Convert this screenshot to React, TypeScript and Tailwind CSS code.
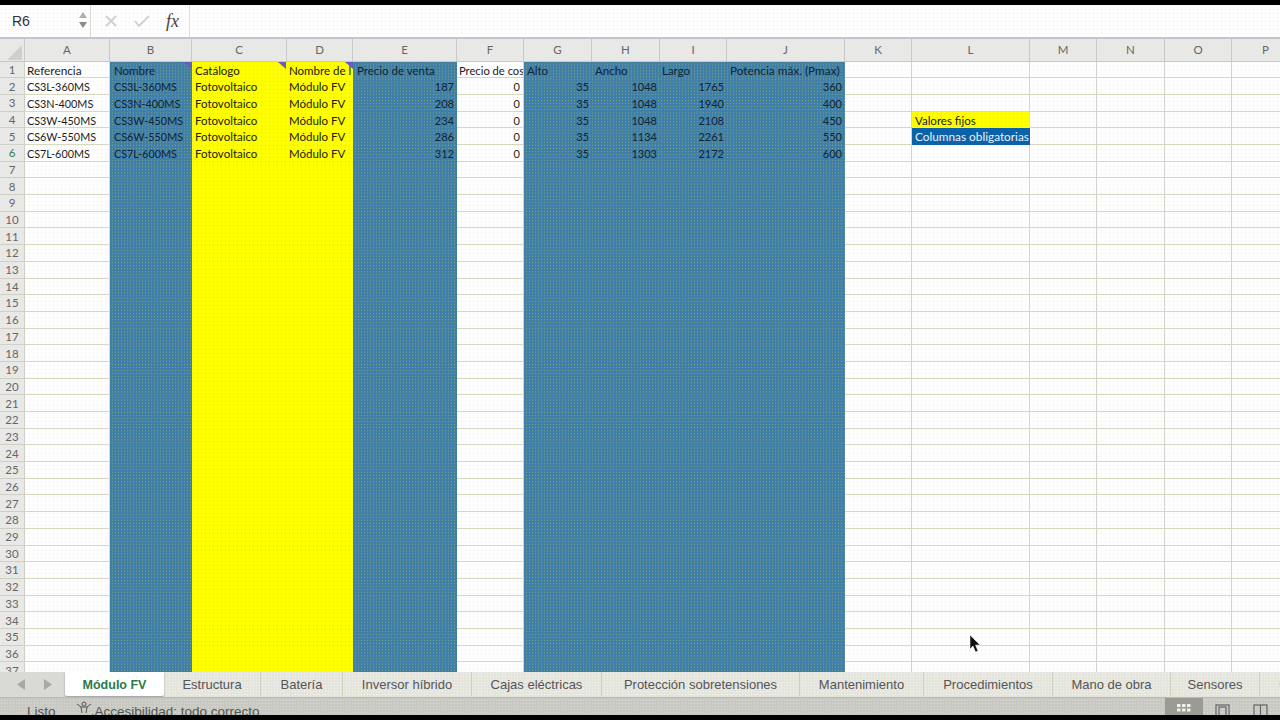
import React from "react";

const COLS = ["A","B","C","D","E","F","G","H","I","J","K","L","M","N","O","P"];

const DOT_WHITE = "bg-[#fefefe] bg-[radial-gradient(circle_at_1.5px_1.5px,#ffff50_0.8px,transparent_0.8px)] bg-[length:4px_4px] bg-fixed";
const DOT_BLUE = "bg-[#3f7fa8] bg-[radial-gradient(circle_at_1.5px_1.5px,#7f9f78_0.7px,transparent_0.7px)] bg-[length:3px_3px] bg-fixed";
const DOT_YELLOW = "bg-[#ffff00] bg-[radial-gradient(circle_at_1.5px_1.5px,#dcdc30_0.6px,transparent_0.6px)] bg-[length:4px_4px] bg-fixed";
const DOT_GREY = "bg-[#e8e8e6] bg-[radial-gradient(circle_at_1.5px_1.5px,#f4f4a8_0.8px,transparent_0.8px)] bg-[length:4px_4px] bg-fixed";
const DOT_TAB = "bg-[#e4e4e0] bg-[radial-gradient(circle_at_1.5px_1.5px,#f7f7d0_0.8px,transparent_0.8px)] bg-[length:3px_3px] bg-fixed";
const DOT_STATUS = "bg-[#c8c8c4] bg-[radial-gradient(circle_at_1.5px_1.5px,#dcdcc8_0.8px,transparent_0.8px)] bg-[length:3px_3px] bg-fixed";

const BLUE = new Set(["B","E","G","H","I","J"]);
const YELLOW = new Set(["C","D"]);

const HEAD: Record<string,string> = {A:"Referencia",B:"Nombre",C:"Catálogo",D:"Nombre de l",E:"Precio de venta",F:"Precio de cos",G:"Alto",H:"Ancho",I:"Largo",J:"Potencia máx. (Pmax)"};
const REFS = ["CS3L-360MS","CS3N-400MS","CS3W-450MS","CS6W-550MS","CS7L-600MS"];
const DATA: Record<string,(string|number)[]> = {
  A: REFS, B: REFS,
  C: Array(5).fill("Fotovoltaico"), D: Array(5).fill("Módulo FV"),
  E: [187,208,234,286,312], F: [0,0,0,0,0], G: [35,35,35,35,35],
  H: [1048,1048,1048,1134,1303], I: [1765,1940,2108,2261,2172], J: [360,400,450,550,600],
};
const PAD: Record<string,string> = {A:"pl-[2px]",B:"pl-[4px]",C:"pl-[3px]",D:"pl-[2px]",E:"pl-[4px]",F:"pl-[2px]",G:"pl-[3px]",H:"pl-[3px]",I:"pl-[2px]",J:"pl-[3px]",L:"pl-[3px]"};
const COMMENT: Record<string,string> = {B:"right-0",C:"right-[1px]",D:"right-0"};
const TABS: [string, number][] = [["Módulo FV",99],["Estructura",97],["Batería",82],["Inversor híbrido",129],["Cajas eléctricas",130],["Protección sobretensiones",198],["Mantenimiento",124],["Procedimientos",129],["Mano de obra",118],["Sensores",89],["Cables",80]];

function Cell({ col, row }: { col: string; row: number }) {
  let content: string | number | undefined;
  if (row === 1) content = HEAD[col];
  else if (row <= 6 && DATA[col]) content = DATA[col][row - 2];
  const num = typeof content === "number";
  let bg = DOT_WHITE + " border-r border-r-[#d4d4cc] border-b border-b-[#d8d8c0]";
  let color = "text-[#1c1c1c]";
  if (BLUE.has(col)) { bg = DOT_BLUE; color = "text-[#0e2436]"; }
  if (YELLOW.has(col)) { bg = DOT_YELLOW; color = "text-[#20200c]"; }
  if (col === "L" && row === 4) { bg = DOT_YELLOW; content = "Valores fijos"; }
  if (col === "L" && row === 5) { bg = "bg-[#0b62a8]"; color = "text-[#e6f0f8]"; content = "Columnas obligatorias"; }
  let size = "text-[11.5px]";
  if (num) size = "text-[11px]";
  if (row > 1 && (col === "A" || col === "B")) size = "text-[10.8px]";
  if (content === "Precio de cos") size = "text-[11.2px]";
  if (content === "Potencia máx. (Pmax)" || content === "Columnas obligatorias" || content === "Referencia") size = "text-[11.8px]";
  return (
    <div className={`relative overflow-hidden whitespace-nowrap leading-[17px] ${num ? "pr-[3px] text-right" : `text-left ${PAD[col] ?? ""}`} ${size} ${bg} ${color}`}>
      {content}
      {row === 1 && COMMENT[col] && (
        <svg className={`absolute top-0 ${COMMENT[col]}`} width="8" height="7" viewBox="0 0 8 7"><polygon points="0,0 8,0 8,7" fill="#6a5ac8" /></svg>
      )}
    </div>
  );
}

export default function App() {
  const rows = Array.from({ length: 37 }, (_, i) => i + 1);
  return (
    <div className="flex h-[720px] w-[1280px] flex-col overflow-hidden bg-black font-['Liberation_Sans',sans-serif]">
      <div className="h-[5px] shrink-0 bg-black" />
      {/* Formula bar */}
      <div className={`flex h-[34px] shrink-0 items-center border-b-2 border-[#c4c4ce] pl-[1px] ${DOT_WHITE}`}>
        <div className="flex h-full w-[90px] items-center justify-between border-r border-[#dcdcd4] pl-[11px] pr-[1px] text-[14px] text-[#333]">
          <span>R6</span>
          <svg width="12" height="24" viewBox="0 0 12 24"><polygon points="6,3 10,9 2,9" fill="#b0b0a8"/><polygon points="6,19 10,13 2,13" fill="#8c8c84"/></svg>
        </div>
        <div className="flex h-full w-[99px] items-center border-r border-[#dcdcd4] pl-[13px]">
          <svg width="14" height="14" viewBox="0 0 14 14" fill="none" stroke="#d0d0cc" strokeWidth="2"><path d="M2 2l10 10M12 2L2 12"/></svg>
          <svg className="ml-[16px]" width="16" height="14" viewBox="0 0 16 14" fill="none" stroke="#d0d0cc" strokeWidth="1.8"><path d="M1 7l4 5L15 2"/></svg>
          <span className="ml-[16px] font-['Liberation_Serif',serif] text-[18px] italic text-[#444]">fx</span>
        </div>
        <div className="flex-1" />
      </div>
      {/* Sheet */}
      <div className="grid h-[633px] shrink-0 grid-cols-[25px_85px_82px_95px_66px_104px_67px_68px_68px_67px_118px_67px_118px_67px_68px_67px_68px] grid-rows-[22.6px_repeat(37,16.7px)] overflow-hidden font-['Lato',sans-serif] text-[11px]">
        <div className={`flex items-end justify-end border-r border-b border-[#c8c8c8] pb-[1px] pr-[2px] ${DOT_GREY}`}>
          <svg width="15" height="15" viewBox="0 0 15 15"><polygon points="15,0 15,15 0,15" fill="#cfcfcb"/></svg>
        </div>
        {COLS.map((c) => (
          <div key={c} className={`flex items-center justify-center border-r border-b border-[#c8c8c8] text-[11.5px] text-[#666] ${DOT_GREY}`}>{c}</div>
        ))}
        {rows.map((r) => (
          <React.Fragment key={r}>
            <div className={`flex items-center justify-center border-r border-b border-[#cfcfc6] text-[11.5px] ${r === 6 ? "text-[#2f7d46]" : "text-[#666]"} ${DOT_GREY}`}>{r}</div>
            {COLS.map((c) => <Cell key={c} col={c} row={r} />)}
          </React.Fragment>
        ))}
      </div>
      {/* Tabs */}
      <div className={`flex h-[25px] shrink-0 text-[13px] ${DOT_TAB}`}>
        <div className="flex w-[65px] shrink-0 items-center gap-[17px] bg-[#d9d9d5] pl-[16px]">
          <svg width="10" height="11" viewBox="0 0 10 11"><polygon points="9,0 9,11 1,5.5" fill="#a8a8a4"/></svg>
          <svg width="10" height="11" viewBox="0 0 10 11"><polygon points="1,0 1,11 9,5.5" fill="#a8a8a4"/></svg>
        </div>
        {TABS.map(([t, w], i) => (
          <div
            key={t}
            style={{ width: w }}
            className={i === 0
              ? "flex h-[24px] shrink-0 items-center justify-center rounded-b-[2px] bg-white pt-[2px] text-[12.5px] font-bold text-[#2a7a4c] shadow-[0_1px_2px_rgba(0,0,0,0.35)]"
              : "flex h-[24px] shrink-0 items-center justify-center border-r border-[#cfcfc8] pt-[2px] text-[#555]"}
          >{t}</div>
        ))}
      </div>
      {/* Status bar */}
      <div className={`flex h-[18px] shrink-0 items-start overflow-hidden border-t border-[#b8b8b4] text-[13.5px] text-[#555] ${DOT_STATUS}`}>
        <span className="ml-[27px] mt-[6px] leading-[15px]">Listo</span>
        <svg className="ml-[20px] mt-[3px]" width="20" height="18" viewBox="0 0 20 18" fill="none" stroke="#555" strokeWidth="1"><circle cx="8" cy="3" r="2"/><path d="M1 3l4 3h6l4-3M5 6l1 6M11 6l-1 6"/><path d="M13 14l2 2 2-3"/></svg>
        <span className="ml-[-1px] mt-[6px] leading-[15px]">Accesibilidad: todo correcto</span>
        <div className="ml-auto flex h-full items-start">
          <div className="flex h-full w-[38px] items-start justify-center bg-[#9b9b94] pt-[5px]">
            <svg width="14" height="12" viewBox="0 0 14 12" fill="#eee"><rect x="0" y="1" width="3.5" height="3"/><rect x="5" y="1" width="3.5" height="3"/><rect x="10" y="1" width="3.5" height="3"/><rect x="0" y="5.5" width="3.5" height="3"/><rect x="5" y="5.5" width="3.5" height="3"/><rect x="10" y="5.5" width="3.5" height="3"/></svg>
          </div>
          <div className="flex h-full w-[38px] items-start justify-center pt-[5px]">
            <svg width="15" height="14" viewBox="0 0 15 14" fill="none" stroke="#666" strokeWidth="1.2"><rect x="1" y="2" width="13" height="12"/><rect x="4" y="4" width="7" height="10"/></svg>
          </div>
          <div className="flex h-full w-[38px] items-start justify-center pt-[5px]">
            <svg width="15" height="14" viewBox="0 0 15 14" fill="none" stroke="#666" strokeWidth="1.2"><rect x="1" y="2" width="13" height="12"/><path d="M7.5 2v12"/></svg>
          </div>
          <div className="w-[1px]" />
        </div>
      </div>
      <div className="flex-1 bg-black" />
      {/* Mouse pointer */}
      <svg className="absolute left-[969px] top-[635px]" width="12" height="18" viewBox="0 0 12 18"><path d="M1 0v14l3-3 2.5 6 2.5-1-2.5-6H11z" fill="#111" stroke="#fff" strokeWidth="0.5"/></svg>
    </div>
  );
}
